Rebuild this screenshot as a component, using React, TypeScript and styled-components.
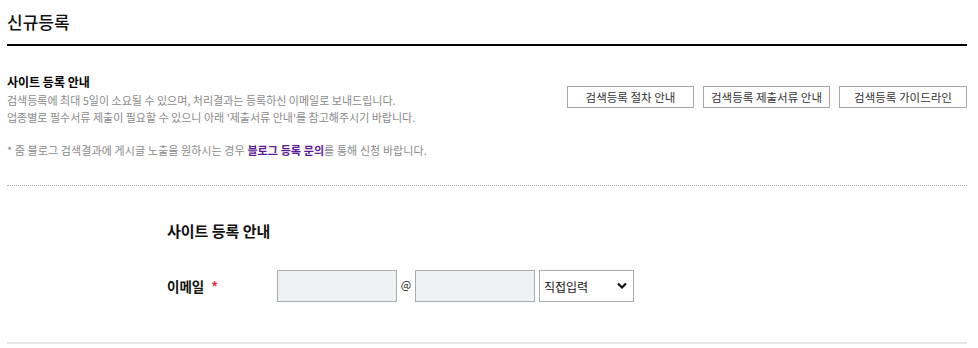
import React from 'react';
import styled, { createGlobalStyle } from 'styled-components';

const GlobalStyle = createGlobalStyle`
  html, body {
    margin: 0;
    padding: 0;
    background: #ffffff;
  }
  body {
    font-family: 'Noto Sans CJK KR', 'Noto Sans', sans-serif;
    color: #111;
  }
`;

const Wrap = styled.div`
  width: 960px;
  margin-left: 7px;
  padding-top: 11px;
`;

const PageTitle = styled.h1`
  margin: 0;
  font-size: 17px;
  font-weight: 500;
  line-height: 22px;
  padding-bottom: 11px;
  border-bottom: 2px solid #000;
`;

const Notice = styled.div`
  display: flex;
  justify-content: space-between;
  align-items: flex-start;
  padding-top: 28px;
`;

const NoticeText = styled.div`
  display: flex;
  flex-direction: column;
`;

const NoticeTitle = styled.strong`
  font-size: 12px;
  font-weight: 700;
  line-height: 16px;
  color: #000;
  margin-bottom: 2px;
`;

const Desc = styled.p`
  margin: 0;
  font-size: 11px;
  line-height: 17px;
  color: #8a8a8a;
`;

const ButtonRow = styled.div`
  display: flex;
  gap: 9px;
  padding-top: 12px;
`;

const GuideButton = styled.button<{ $w: number }>`
  width: ${(p) => p.$w}px;
  height: 22px;
  padding: 0;
  background: #fff;
  border: 1px solid #a8a8a8;
  font-family: 'Noto Sans CJK KR', sans-serif;
  font-size: 11.5px;
  color: #333;
  cursor: pointer;
`;

const BlogNote = styled.p`
  margin: 16px 0 0;
  font-size: 11px;
  line-height: 17px;
  color: #8a8a8a;
  letter-spacing: 0.1px;
  padding-bottom: 26px;
  border-bottom: 1px dotted #aaa;
`;

const BlogLink = styled.a`
  color: #5b1a96;
  font-weight: 700;
  text-decoration: none;
`;

const Form = styled.div`
  padding: 36px 0 40px 160px;
  border-bottom: 2px solid #e6e6e6;
`;

const FormTitle = styled.h2`
  margin: 0 0 30px;
  font-size: 15px;
  font-weight: 700;
  line-height: 18px;
  color: #111;
`;

const Row = styled.div`
  display: flex;
  align-items: center;
`;

const Label = styled.div`
  width: 110px;
  font-size: 13.5px;
  font-weight: 700;
  color: #111;
`;

const Req = styled.span`
  color: #e8304a;
  margin-left: 7px;
  font-weight: 700;
`;

const TextInput = styled.input`
  width: 120px;
  height: 32px;
  box-sizing: border-box;
  border: 1px solid #a9acaf;
  background: #eef2f5;
  padding: 0 6px;
  font-size: 12px;
`;

const At = styled.span`
  width: 18px;
  text-align: center;
  font-size: 11px;
  color: #222;
  margin-top: -4px;
`;

const SelectBox = styled.div`
  position: relative;
  margin-left: 4px;
`;

const Select = styled.select`
  width: 95px;
  height: 32px;
  box-sizing: border-box;
  border: 1px solid #a9acaf;
  background: #fff;
  padding: 0 4px;
  font-family: 'Noto Sans CJK KR', sans-serif;
  font-size: 12px;
  color: #111;
  appearance: none;
`;

const Chevron = styled.svg`
  position: absolute;
  right: 7px;
  top: 12px;
  pointer-events: none;
`;

export default function App() {
  return (
    <>
      <GlobalStyle />
      <Wrap>
        <PageTitle>신규등록</PageTitle>
        <Notice>
          <NoticeText>
            <NoticeTitle>사이트 등록 안내</NoticeTitle>
            <Desc>검색등록에 최대 5일이 소요될 수 있으며, 처리결과는 등록하신 이메일로 보내드립니다.</Desc>
            <Desc>업종별로 필수서류 제출이 필요할 수 있으니 아래 '제출서류 안내'를 참고해주시기 바랍니다.</Desc>
          </NoticeText>
          <ButtonRow>
            <GuideButton $w={127}>검색등록 절차 안내</GuideButton>
            <GuideButton $w={127}>검색등록 제출서류 안내</GuideButton>
            <GuideButton $w={128}>검색등록 가이드라인</GuideButton>
          </ButtonRow>
        </Notice>
        <BlogNote>
          * 줌 블로그 검색결과에 게시글 노출을 원하시는 경우 <BlogLink href="#">블로그 등록 문의</BlogLink>를 통해 신청 바랍니다.
        </BlogNote>
        <Form>
          <FormTitle>사이트 등록 안내</FormTitle>
          <Row>
            <Label>
              이메일<Req>*</Req>
            </Label>
            <TextInput />
            <At>@</At>
            <TextInput />
            <SelectBox>
              <Select defaultValue="direct">
                <option value="direct">직접입력</option>
              </Select>
              <Chevron width="10" height="7" viewBox="0 0 10 7">
                <path d="M1 1.5 L5 5.5 L9 1.5" stroke="#111" strokeWidth="2.2" fill="none" />
              </Chevron>
            </SelectBox>
          </Row>
        </Form>
      </Wrap>
    </>
  );
}
